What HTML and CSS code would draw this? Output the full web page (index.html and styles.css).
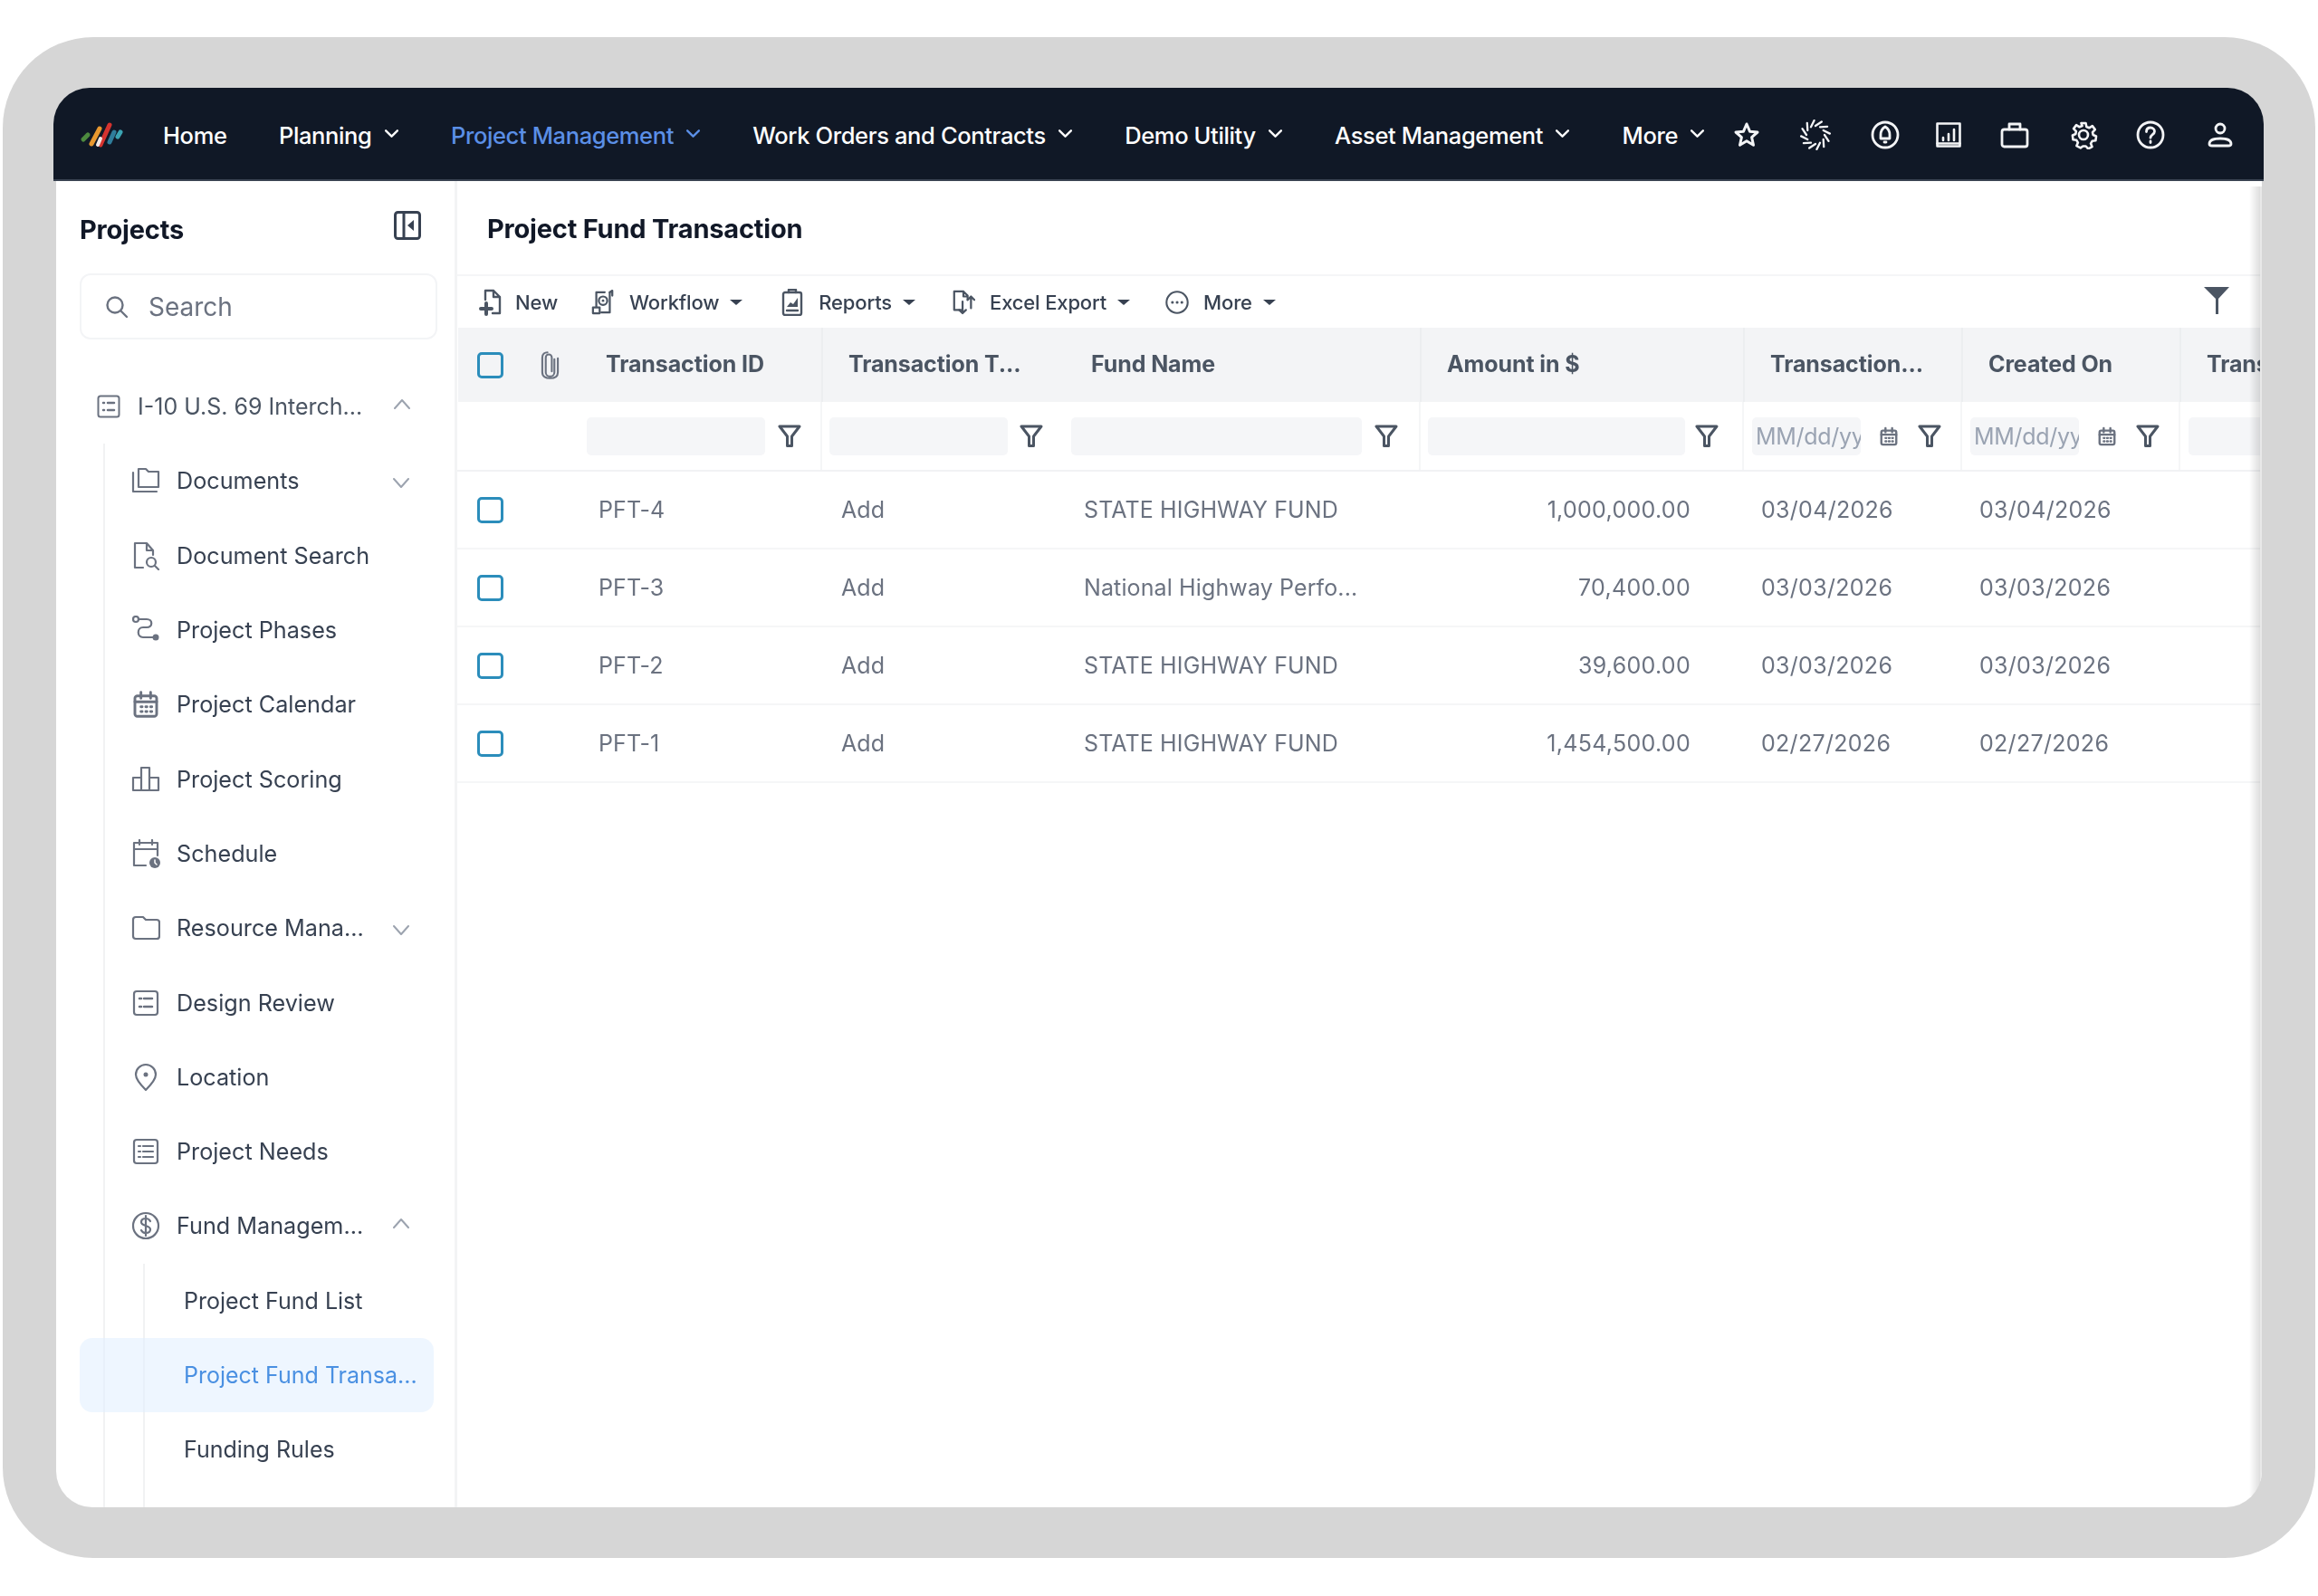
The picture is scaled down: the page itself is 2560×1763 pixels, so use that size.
FILE: index.html
```html
<!DOCTYPE html>
<html lang="en">
<head>
<meta charset="utf-8">
<title>Project Fund Transaction</title>
<link rel="stylesheet" href="styles.css">
</head>
<body>
<svg class="defs" aria-hidden="true">
  <symbol id="chev" viewBox="0 0 16 10"><path d="M2 2l6 6 6-6"/></symbol>
  <symbol id="funnel" viewBox="0 0 26 26"><path d="M2 2h22l-8.500 11v10.500h-5V13z" /></symbol>
  <symbol id="list-dots" viewBox="0 0 26 26"><rect x="1.500" y="1.500" width="23" height="23" rx="2.500"/><path d="M7 9h1M12 9h7M7 17h1M12 17h7" stroke-width="2.500"/></symbol>
  <symbol id="calendar" viewBox="0 0 24 24"><rect x="3" y="5" width="18" height="17" rx="2"/><path d="M3 10h18M8 2v5M16 2v5"/><path d="M8 14h1M12 14h1M16 14h1M8 18h1M12 18h1M16 18h1"/></symbol>
  <symbol id="caret" viewBox="0 0 16 8"><path class="fill" d="M1 1h14L8 7z"/></symbol>
</svg>

<div class="frame">
  <div class="app">
    <header class="nav">
      <svg class="logo" viewBox="0 0 50 28">
        <path d="M4 19l5-5" stroke="#4d8a3f" stroke-width="5"/>
        <path d="M13 24l9-17" stroke="#e9982f" stroke-width="5"/>
        <path d="M23 25L33 3" stroke="#d5332f" stroke-width="5"/>
        <path d="M20 25l3-7" stroke="#f3e9e4" stroke-width="4"/>
        <path d="M33 22l5-11" stroke="#2f7d9b" stroke-width="5"/>
        <path d="M42 16l3-5" stroke="#3ba4b3" stroke-width="5"/>
      </svg>
      <a class="nav-link home">Home</a>
      <a class="nav-link">Planning<svg class="nav-chev"><use href="#chev"/></svg></a>
      <a class="nav-link active">Project Management<svg class="nav-chev"><use href="#chev"/></svg></a>
      <a class="nav-link">Work Orders and Contracts<svg class="nav-chev"><use href="#chev"/></svg></a>
      <a class="nav-link">Demo Utility<svg class="nav-chev"><use href="#chev"/></svg></a>
      <a class="nav-link">Asset Management<svg class="nav-chev"><use href="#chev"/></svg></a>
      <a class="nav-link more">More<svg class="nav-chev"><use href="#chev"/></svg></a>
      <div class="nav-icons">
        <svg class="star" viewBox="0 0 30 30"><path d="M15 3l3.500 8.200 8.500.8-6.400 5.600 1.900 8.700L15 21.700 7.500 26.300l1.900-8.700L3 12l8.500-.8z"/></svg>
        <svg class="spin" viewBox="0 0 34 34"><path d="M17 7l6.800-4.500M22 8.300l8.100-.5M25.700 12l7.200 3.600M27 17l4.500 6.800M25.700 22l.5 8.100M22 25.700l-3.600 7.200M17 27l-6.800 4.500M12 25.700l-8.100.5M8.300 22l-7.200-3.600M7 17l-4.500-6.800M8.300 12l-.5-8.100M12 8.300l3.600-7.200"/></svg>
        <svg class="bell" viewBox="0 0 32 32"><circle cx="16" cy="16" r="14"/><path d="M16 7c3.500 2 5 5 5 9v4H11v-4c0-4 1.500-7 5-9zM15 24h2"/></svg>
        <svg class="chart" viewBox="0 0 28 28"><rect x="1.500" y="1.500" width="25" height="25"/><path d="M1.500 23.500h25M8 20v-3M14 20v-7M20 20V8" stroke-width="2.600"/></svg>
        <svg class="bag" viewBox="0 0 32 30"><rect x="2" y="9" width="28" height="19" rx="2.500"/><path d="M10 9V3h12v6"/></svg>
        <svg class="gear" viewBox="0 0 32 32"><circle cx="16" cy="16" r="5"/><path d="M13.500 3h5l.8 4 3 1.300 3.500-2.200 3 4-2.800 3 .6 2.900 3.400 1.500-.6 4.800-3.800.5-1.600 2.800 1.500 3.500-4.300 2.300-2.600-2.900h-3.200L12.700 30.400 8.400 28.100l1.500-3.500-1.600-2.800-3.800-.5-.6-4.800 3.400-1.500.6-2.900-2.800-3 3-4 3.500 2.200 3-1.300z"/></svg>
        <svg class="help" viewBox="0 0 32 32"><circle cx="16" cy="16" r="14"/><path d="M11.500 12.500c0-3 2-4.500 4.500-4.500s4.500 1.800 4.500 4.200c0 3.300-4.500 3.500-4.500 7M16 23v1.500"/></svg>
        <svg class="user" viewBox="0 0 28 30"><circle cx="14" cy="8" r="5"/><path d="M5 27c-2.500 0-3-1-3-2 0-4 5-6 12-6s12 2 12 6c0 1-.5 2-3 2z"/></svg>
      </div>
    </header>

    <div class="body">
      <aside class="side">
        <div class="side-head">
          <h2 class="side-title">Projects</h2>
          <svg class="collapse" viewBox="0 0 30 32"><rect x="1.500" y="1.500" width="27" height="29" rx="3"/><path d="M11 2v28"/><path class="fill" d="M22 10v12l-7-6z"/></svg>
        </div>
        <div class="search">
          <svg class="search-ic" viewBox="0 0 26 26"><circle cx="11" cy="11" r="8.500"/><path d="M17.500 17.500L24 24"/></svg>
          <span>Search</span>
        </div>
        <div class="tree">
          <div class="row root">
            <svg class="root-ic"><use href="#list-dots"/></svg>
            <span class="label">I-10 U.S. 69 Interch...</span>
            <svg class="tree-chev up" viewBox="0 0 18 12"><path d="M1 11l8-9 8 9"/></svg>
          </div>
          <div class="branch">
            <div class="row">
              <svg class="ic" viewBox="0 0 32 32"><path d="M2 7v21h26"/><path d="M8 23V3h8l3 3h11v17z"/></svg>
              <span class="label">Documents</span>
              <svg class="tree-chev" viewBox="0 0 18 12"><path d="M1 1l8 9 8-9"/></svg>
            </div>
            <div class="row">
              <svg class="ic" viewBox="0 0 32 32"><path d="M13 29H4V2h13l7 8v5M17 2v8h7"/><circle cx="22" cy="23" r="5"/><path d="M26 27l4 4"/></svg>
              <span class="label">Document Search</span>
            </div>
            <div class="row">
              <svg class="ic" viewBox="0 0 32 32"><circle cx="5" cy="4" r="3"/><path d="M8 4h9c7 0 7 9 0 9h-4c-7 0-7 11 0 11h11"/><circle class="fill" cx="27" cy="24" r="3.500"/></svg>
              <span class="label">Project Phases</span>
            </div>
            <div class="row">
              <svg class="ic"><use href="#calendar"/></svg>
              <span class="label">Project Calendar</span>
            </div>
            <div class="row">
              <svg class="ic" viewBox="0 0 32 32"><path d="M2 28V14h9v14zM11 28V3h9v25zM20 28V14h10v14zM2 28h28"/></svg>
              <span class="label">Project Scoring</span>
            </div>
            <div class="row">
              <svg class="ic" viewBox="0 0 32 32"><path d="M16 29H3V4h26v14M3 11h26M9 1v5M23 1v5"/><circle class="fill" cx="26" cy="26" r="6"/><path d="M26 23v3l2 2" stroke="#fff" stroke-width="1.500"/></svg>
              <span class="label">Schedule</span>
            </div>
            <div class="row">
              <svg class="ic" viewBox="0 0 32 32"><path d="M2 7c0-2 1-3 3-3h8l3 3h12c2 0 3 1 3 3v15c0 2-1 3-3 3H5c-2 0-3-1-3-3z"/></svg>
              <span class="label">Resource Mana...</span>
              <svg class="tree-chev" viewBox="0 0 18 12"><path d="M1 1l8 9 8-9"/></svg>
            </div>
            <div class="row">
              <svg class="ic" viewBox="0 0 32 32"><rect x="3" y="3" width="26" height="26" rx="3"/><path d="M9 11h2M14 11h9M9 20h2M14 20h9" stroke-width="2.500"/></svg>
              <span class="label">Design Review</span>
            </div>
            <div class="row">
              <svg class="ic" viewBox="0 0 32 32"><path d="M16 30C9 23 5 18 5 13a11 11 0 0 1 22 0c0 5-4 10-11 17z"/><circle class="fill" cx="16" cy="13" r="2.500"/></svg>
              <span class="label">Location</span>
            </div>
            <div class="row">
              <svg class="ic" viewBox="0 0 32 32"><rect x="3" y="3" width="26" height="26" rx="3"/><path d="M8 10h2M13 10h11M8 16h2M13 16h11M8 22h2M13 22h11"/></svg>
              <span class="label">Project Needs</span>
            </div>
            <div class="row">
              <svg class="ic" viewBox="0 0 32 32"><circle cx="16" cy="16" r="14"/><path d="M21 11c-1-2-3-3-5-3-3 0-5 1.500-5 4 0 5 10 3 10 8 0 2.500-2 4-5 4-2 0-4-1-5-3M16 5v22"/></svg>
              <span class="label">Fund Managem...</span>
              <svg class="tree-chev up" viewBox="0 0 18 12"><path d="M1 11l8-9 8 9"/></svg>
            </div>
            <div class="subbranch">
              <div class="subrow">Project Fund List</div>
              <div class="subrow current">Project Fund Transa...</div>
              <div class="subrow">Funding Rules</div>
            </div>
          </div>
        </div>
      </aside>

      <main class="main">
        <h1 class="page-title">Project Fund Transaction</h1>
        <div class="toolbar">
          <button class="tool t-new">
            <svg class="tool-ic" viewBox="0 0 26 30"><path d="M7 12V2h9l7 7v18h-8M16 2v7h7"/><path d="M2 22h12M8 16v12" stroke-width="4"/></svg>New
          </button>
          <button class="tool t-flow">
            <svg class="tool-ic" viewBox="0 0 28 30"><path d="M6 20V3h10M22 3v24H12"/><circle cx="14" cy="13" r="5"/><circle class="fill" cx="14" cy="13" r="1.500"/><rect x="2" y="21" width="8" height="7"/><path d="M25 7V1l-3 2"/></svg>Workflow<svg class="caret"><use href="#caret"/></svg>
          </button>
          <button class="tool t-rep">
            <svg class="tool-ic" viewBox="0 0 24 30"><rect x="2" y="4" width="20" height="25" rx="2"/><path d="M8 4V1h8v3M6 24h12"/><path class="fill" d="M6 20l4-5 3 2 5-7v10z"/></svg>Reports<svg class="caret"><use href="#caret"/></svg>
          </button>
          <button class="tool t-xl">
            <svg class="tool-ic" viewBox="0 0 28 30"><path d="M11 24H3V2h11l5 5v5M14 2v6h5"/><path d="M13 14v14M9 24l4 4 4-4M23 22V8M19 12l4-4 4 4"/></svg>Excel Export<svg class="caret"><use href="#caret"/></svg>
          </button>
          <button class="tool t-more">
            <svg class="tool-ic" viewBox="0 0 30 30"><circle cx="15" cy="15" r="13.500"/><path d="M9 15h.1M15 15h.1M21 15h.1" stroke-width="3.500"/></svg>More<svg class="caret"><use href="#caret"/></svg>
          </button>
          <svg class="filter-solid" viewBox="0 0 28 30"><path class="fill" d="M0 0h28L16 13v17h-3V13z"/></svg>
        </div>

        <div class="grid">
          <div class="tr thead">
            <div class="th th-sel">
              <span class="check"></span>
              <svg class="clip" viewBox="0 0 22 32"><path d="M16 9v15a5 5 0 0 1-10 0V7a3.500 3.500 0 0 1 7 0v16"/><path d="M20 8v16c0 5-4 7-9 7s-9-2-9-7V7c0-4 3-6 6-6"/></svg>
            </div>
            <div class="th sep">Transaction ID</div>
            <div class="th">Transaction T...</div>
            <div class="th sep">Fund Name</div>
            <div class="th sep">Amount in $</div>
            <div class="th sep">Transaction...</div>
            <div class="th sep">Created On</div>
            <div class="th">Trans</div>
          </div>
          <div class="tr tfilter">
            <div class="fc"></div>
            <div class="fc sep pad1"><span class="finput"></span><svg class="funnel"><use href="#funnel"/></svg></div>
            <div class="fc pad2"><span class="finput"></span><svg class="funnel"><use href="#funnel"/></svg></div>
            <div class="fc sep pad3"><span class="finput"></span><svg class="funnel"><use href="#funnel"/></svg></div>
            <div class="fc sep pad4"><span class="finput"></span><svg class="funnel"><use href="#funnel"/></svg></div>
            <div class="fc sep pad5"><span class="finput date">MM/dd/yy</span><svg class="cal"><use href="#calendar"/></svg><svg class="funnel"><use href="#funnel"/></svg></div>
            <div class="fc sep pad5"><span class="finput date">MM/dd/yy</span><svg class="cal"><use href="#calendar"/></svg><svg class="funnel"><use href="#funnel"/></svg></div>
            <div class="fc pad5"><span class="finput"></span></div>
          </div>
          <div class="tr trow">
            <div class="td td-sel"><span class="check"></span></div><div class="td">PFT-4</div><div class="td">Add</div><div class="td">STATE HIGHWAY FUND</div><div class="td num">1,000,000.00</div><div class="td d1">03/04/2026</div><div class="td d1">03/04/2026</div><div class="td"></div>
          </div>
          <div class="tr trow">
            <div class="td td-sel"><span class="check"></span></div><div class="td">PFT-3</div><div class="td">Add</div><div class="td">National Highway Perfo...</div><div class="td num">70,400.00</div><div class="td d1">03/03/2026</div><div class="td d1">03/03/2026</div><div class="td"></div>
          </div>
          <div class="tr trow">
            <div class="td td-sel"><span class="check"></span></div><div class="td">PFT-2</div><div class="td">Add</div><div class="td">STATE HIGHWAY FUND</div><div class="td num">39,600.00</div><div class="td d1">03/03/2026</div><div class="td d1">03/03/2026</div><div class="td"></div>
          </div>
          <div class="tr trow">
            <div class="td td-sel"><span class="check"></span></div><div class="td">PFT-1</div><div class="td">Add</div><div class="td">STATE HIGHWAY FUND</div><div class="td num">1,454,500.00</div><div class="td d1">02/27/2026</div><div class="td d1">02/27/2026</div><div class="td"></div>
          </div>
        </div>
      </main>
    </div>
  </div>
</div>
</body>
</html>
```
FILE: styles.css
```css
* { box-sizing: border-box; }
html, body { margin: 0; height: 100%; background: #fff; }
body {
  padding: 41px 3px 42px;
  font-family: Inter, "Liberation Sans", sans-serif;
  color: #374151;
  overflow: hidden;
}
.defs { display: none; }
svg { fill: none; stroke: currentColor; stroke-width: 2; flex: none; display: block; }
svg .fill { fill: currentColor; stroke: none; }
svg path, svg rect, svg circle { stroke-linecap: round; stroke-linejoin: round; }

.frame {
  width: 2554px;
  height: 1680px;
  background: #d6d6d6;
  border-radius: 100px;
  padding: 56px 57px 56px 56px;
}
.app {
  height: 100%;
  display: flex;
  flex-direction: column;
  filter: blur(.7px);
}

/* top bar */
.nav {
  height: 103px;
  flex: none;
  background: #101826;
  border-radius: 40px 40px 0 0;
  border-bottom: 2px solid #3a4352;
  padding: 3px 32px 0 29px;
  display: flex;
  align-items: center;
  color: #fff;
}
.logo { width: 50px; height: 28px; margin-right: 42px; }
.nav-link {
  display: flex;
  align-items: center;
  font-size: 25.500px;
  font-weight: 500;
  letter-spacing: -.37px;
  margin-right: 57.400px;
  white-space: nowrap;
}
.nav-link.active { color: #5b8fe6; }
.nav-chev { width: 17px; height: 11px; margin-left: 13px; stroke-width: 2.200; position: relative; top: -2px; }
.more { margin-right: 31px; }
.nav-icons { flex: 1; display: flex; align-items: center; color: #f3f4f6; }
.star { width: 30px; height: 30px; stroke-width: 3; }
.spin { width: 34px; height: 34px; stroke-width: 2.300; margin-left: 44px; }
.bell { width: 32px; height: 32px; stroke-width: 2.800; margin-left: 44px; }
.chart { width: 28px; height: 28px; stroke-width: 2.600; margin-left: 40px; }
.bag { width: 32px; height: 30px; stroke-width: 2.800; margin-left: 43px; }
.gear { width: 32px; height: 32px; stroke-width: 2.600; margin-left: 44px; }
.help { width: 32px; height: 32px; stroke-width: 2.800; margin-left: 42px; }
.user { width: 28px; height: 30px; stroke-width: 2.800; margin-left: 47px; }

/* body */
.body {
  flex: 1;
  min-height: 0;
  margin: 0 2px 0 3px;
  background: #fff;
  border-radius: 0 0 40px 40px;
  display: flex;
  overflow: hidden;
  position: relative;
}
.body::after {
  content: "";
  position: absolute;
  top: 6px;
  right: 0;
  bottom: 0;
  width: 14px;
  background: linear-gradient(to right, rgba(0,0,0,0), rgba(0,0,0,.13) 85%, #e8e8e8 85%);
}

/* sidebar */
.side {
  width: 443px;
  flex: none;
  border-right: 3px solid #f3f4f5;
  padding: 33px 0 0 26px;
  overflow: hidden;
}
.side-head {
  display: flex;
  align-items: center;
  justify-content: space-between;
  height: 32px;
  padding-right: 37px;
}
.side-title { margin: 0; padding-top: 9px; font-size: 29px; font-weight: 700; color: #111827; letter-spacing: -.2px; }
.collapse { width: 30px; height: 32px; color: #374151; stroke-width: 3; }
.search {
  width: 395px;
  height: 73px;
  margin-top: 37px;
  border: 2px solid #f3f4f6;
  border-radius: 12px;
  display: flex;
  align-items: center;
  gap: 22px;
  padding-left: 26px;
  font-size: 28px;
  color: #6b7280;
}
.search-ic { width: 26px; height: 26px; stroke-width: 2.400; }
.tree { margin-top: 33px; }
.row {
  height: 82.300px;
  display: flex;
  align-items: center;
  font-size: 25.200px;
  color: #374151;
  white-space: nowrap;
}
.root { padding-left: 19px; color: #4b5563; font-size: 25px; }
.root-ic { width: 26px; height: 26px; margin-right: 19px; color: #6b7280; }
.root .label { width: 283px; }
.branch { margin-left: 26px; border-left: 2px solid #f1f2f3; }
.ic { width: 32px; height: 32px; margin: 0 18px 0 29px; color: #6b7280; stroke-width: 2.200; }
.branch > .row .label { width: 239px; }
.tree-chev { width: 18px; height: 12px; color: #9ca3af; stroke-width: 2; margin-top: 6px; }
.tree-chev.up { margin-top: -6px; }
.subbranch { margin-left: 42px; border-left: 2px solid #f1f2f3; height: 400px; }
.subrow {
  height: 82px;
  display: flex;
  align-items: center;
  padding-left: 43px;
  font-size: 25px;
  color: #374151;
  white-space: nowrap;
}
.subrow.current {
  margin-left: -72px;
  width: 391px;
  padding-left: 115px;
  background: rgba(224, 239, 255, .55);
  border-radius: 14px;
  color: #4a90e2;
}

/* main */
.main { flex: 1; min-width: 0; overflow: hidden; }
.page-title {
  margin: 0;
  height: 103px;
  padding: 33px 0 0 33px;
  font-size: 29px;
  line-height: 40px;
  font-weight: 700;
  color: #111827;
  letter-spacing: -.2px;
}
.toolbar {
  height: 59px;
  border-top: 2px solid #f5f6f7;
  display: flex;
  align-items: center;
  padding-left: 24px;
  padding-right: 36px;
}
.tool {
  display: flex;
  align-items: center;
  border: 0;
  background: none;
  padding: 0;
  font: 500 22px Inter, "Liberation Sans", sans-serif;
  color: #374151;
  letter-spacing: -.15px;
}
.tool-ic { width: 26px; height: 30px; margin-right: 16px; color: #4b5563; stroke-width: 2.400; }
.t-new .tool-ic { margin-right: 14px; }
.t-new { margin-right: 37px; }
.t-flow { margin-right: 41px; }
.t-rep { margin-right: 39px; }
.t-xl { margin-right: 38px; }
.caret { width: 16px; height: 8px; margin-left: 11px; color: #374151; }
.filter-solid { width: 28px; height: 30px; margin: -3px 0 0 auto; color: #4b5563; }

/* table */
.grid { width: 2030px; }
.tr {
  display: grid;
  grid-template-columns: 135px 268px 268px 393px 357px 241px 241px 127px;
}
.thead { height: 82px; background: #f3f4f6; margin-left: 1px; font-size: 25px; font-weight: 700; color: #4b5563; }
.th { display: flex; align-items: center; padding: 0 0 3px 28px; letter-spacing: -.1px; white-space: nowrap; overflow: hidden; }
.th-sel { padding: 0 0 0 21px; gap: 41px; }
.sep { border-right: 2px solid #eceef0; }
.check {
  display: block;
  width: 29px;
  height: 29px;
  flex: none;
  border: 3px solid #2b8dbb;
  border-radius: 5px;
  background: #fff;
}
.th .check { background: transparent; }
.clip { width: 21px; height: 31px; color: #6b7280; stroke-width: 2.200; }
.tfilter { height: 77px; border-bottom: 2px solid #f1f2f4; }
.fc { display: flex; align-items: center; gap: 14px; }
.tfilter .sep { border-right-color: #f5f6f7; }
.pad1 { padding: 0 21px 0 8px; }
.pad2 { padding: 0 24px 0 8px; gap: 13px; }
.pad3 { padding: 0 23px 0 7px; }
.pad4 { padding: 0 26px 0 8px; gap: 11px; }
.pad5 { padding: 0 0 0 9px; }
.finput {
  flex: 1;
  height: 42px;
  background: #f5f6f8;
  border-radius: 5px;
}
.finput.date {
  flex: none;
  width: 120px;
  overflow: hidden;
  font-size: 25px;
  line-height: 42px;
  padding-left: 4px;
  letter-spacing: -.3px;
  color: #9aa3b2;
  white-space: nowrap;
}
.funnel { width: 26px; height: 26px; color: #4b5563; stroke-width: 3; }
.cal { width: 22px; height: 24px; color: #6b7280; margin: 0 7px 0 6px; stroke-width: 2.600; }
.trow { height: 86px; border-bottom: 2px solid #f5f6f7; font-size: 25px; color: #6b7280; letter-spacing: .12px; }
.td { display: flex; align-items: center; padding-left: 21px; white-space: nowrap; overflow: hidden; }
.td-sel { padding-left: 22px; }
.td.num { justify-content: flex-end; padding: 0 59px 0 0; letter-spacing: .3px; }
.td.d1 { padding-left: 19px; letter-spacing: .3px; }
```
